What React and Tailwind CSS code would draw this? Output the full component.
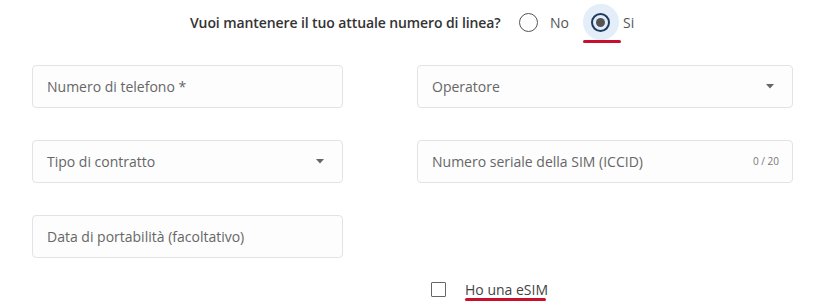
import React from "react";

const font = { fontFamily: '"Open Sans", "Liberation Sans", sans-serif' };

function Caret() {
  return (
    <svg width="8" height="5" viewBox="0 0 8 5" className="shrink-0">
      <path d="M0 0 L8 0 L4 4.5 Z" fill="#666" />
    </svg>
  );
}

function Field({ label, caret, counter }) {
  return (
    <div className="h-[43px] rounded-[4px] border border-[#e3e3e3] bg-[#fdfdfd] flex items-center pl-[14px] pr-[18px] justify-between">
      <span className="text-[14px] text-[#666]">{label}</span>
      {caret && <Caret />}
      {counter && <span className="text-[10px] text-[#777] mr-[-5px]">{counter}</span>}
    </div>
  );
}

export default function App() {
  return (
    <div className="w-[825px] h-[308px] bg-white relative overflow-hidden" style={font}>
      <div className="h-[44px] flex items-center pl-[190px]">
        <div className="w-[329px] shrink-0">
          <span className="text-[14px] font-semibold text-[#333] tracking-[-0.1px]">Vuoi mantenere il tuo attuale numero di linea?</span>
        </div>
        <div className="flex items-center">
          <span className="w-[19px] h-[19px] rounded-full border-[1.5px] border-[#555]" />
          <span className="ml-[12px] text-[14px] text-[#555]">No</span>
        </div>
        <div className="ml-[14px] flex items-center">
          <div className="relative w-[36px] h-[36px] rounded-full bg-[#e3eef8] flex items-center justify-center">
            <span className="w-[19px] h-[19px] rounded-full border-[2px] border-[#1f3a5f] flex items-center justify-center">
              <span className="w-[9px] h-[9px] rounded-full bg-[#555]" />
            </span>
            <span className="absolute left-0 top-[36px] w-[38px] h-[3px] rounded-full bg-[#c8102e]" />
          </div>
          <span className="ml-[4px] text-[14px] text-[#555]">Si</span>
        </div>
      </div>
      <div className="grid grid-cols-[311px_376px] gap-x-[74px] gap-y-[32px] pl-[32px] mt-[21px]">
        <Field label="Numero di telefono *" />
        <Field label="Operatore" caret />
        <Field label="Tipo di contratto" caret />
        <Field label="Numero seriale della SIM (ICCID)" counter="0 / 20" />
        <Field label="Data di portabilità (facoltativo)" />
        <div />
      </div>
      <div className="flex items-center pl-[431px] mt-[19px]">
        <span className="w-[15px] h-[15px] border-[1.5px] border-[#666] rounded-[1px]" />
        <div className="relative ml-[19px]">
          <span className="text-[14px] text-[#444]">Ho una eSIM</span>
          <span className="absolute left-0 top-[21px] w-[81px] h-[3px] rounded-full bg-[#c8102e]" />
        </div>
      </div>
    </div>
  );
}
